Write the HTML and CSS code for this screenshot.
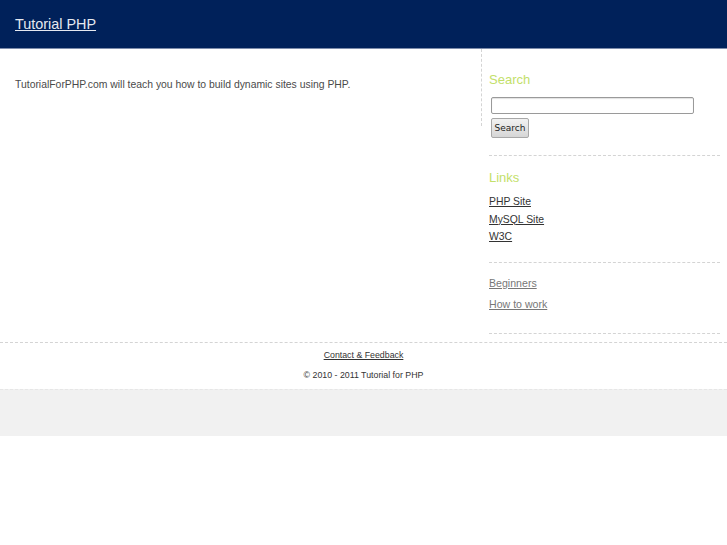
FILE: index.html
```html
<!DOCTYPE html>
<html>
<head>
<meta charset="utf-8">
<title>Tutorial PHP</title>
<link rel="stylesheet" href="styles.css">
</head>
<body>
<div class="header"><a class="logo" href="#">Tutorial PHP</a></div>
<div class="main">
  <div class="content">
    <p>TutorialForPHP.com will teach you how to build dynamic sites using PHP.</p>
  </div>
  <div class="sidebar">
    <div class="block block-search">
      <h2>Search</h2>
      <input class="search-input" type="text">
      <button class="search-btn">Search</button>
    </div>
    <div class="block block-links">
      <h2>Links</h2>
      <ul class="links">
        <li><a href="#">PHP Site</a></li>
        <li><a href="#">MySQL Site</a></li>
        <li><a href="#">W3C</a></li>
      </ul>
    </div>
    <div class="block block-more">
      <ul class="more">
        <li><a href="#">Beginners</a></li>
        <li><a href="#">How to work</a></li>
      </ul>
    </div>
  </div>
</div>
<div class="footer">
  <div class="footer-line"><a href="#">Contact &amp; Feedback</a></div>
  <div class="footer-line">© 2010 - 2011 Tutorial for PHP</div>
</div>
<div class="band"></div>
</body>
</html>
```
FILE: styles.css
```css
html, body { margin: 0; padding: 0; background: #fff; }
body { font-family: "Liberation Sans", Arial, sans-serif; color: #444; }
.header {
  height: 48px;
  background: #00215a;
  border-bottom: 1px solid #7d8cab;
  display: flex;
  align-items: center;
  padding-left: 15px;
}
.logo { color: #e6e9f0; font-size: 14.4px; text-decoration: underline; }
.main {
  display: flex;
  align-items: flex-start;
  padding-bottom: 8px;
  border-bottom: 1px dashed #d4d4d4;
}
.content {
  width: 466px;
  padding: 29px 0 35px 15px;
  border-right: 1px dashed #d4d4d4;
}
.content p { margin: 0; font-size: 10.4px; line-height: 13px; color: #4a4a4a; }
.sidebar { width: 231px; margin-left: 7px; }
.block { border-bottom: 1px dashed #d4d4d4; }
.block h2 {
  margin: 0;
  font-size: 13px;
  line-height: 16px;
  font-weight: normal;
  color: #c3e06a;
}
.block-search { padding: 23px 0 17px; }
.block-search h2 { margin-bottom: 9px; }
.search-input {
  display: block;
  margin: 0 0 4px 2px;
  width: 203px;
  height: 17px;
  box-sizing: border-box;
  border: 1px solid #9a9a9a;
  border-radius: 2px;
  box-shadow: inset 0 1px 1px rgba(0,0,0,0.12);
  padding: 0;
}
.search-btn {
  display: block;
  margin-left: 2px;
  height: 20px;
  width: 38px;
  padding: 0;
  font-family: "DejaVu Sans", sans-serif;
  font-size: 9px;
  color: #222;
  border: 1px solid #a8a8a8;
  border-radius: 2px;
  background: linear-gradient(#f2f2f2, #d6d6d6);
}
.block-links { padding: 14px 0 16px; }
.links { list-style: none; margin: 7px 0 0; padding: 0; }
.links li { font-size: 10.4px; line-height: 17.5px; }
.links a { color: #333; }
.block-more { padding: 10px 0 18px; }
.more { list-style: none; margin: 0; padding: 0; }
.more li { font-size: 10.6px; line-height: 21px; }
.more a { color: #777; }
.footer { padding: 2px 0 4px; text-align: center; }
.footer-line { font-size: 8.8px; line-height: 20px; color: #333; }
.footer-line a { color: #333; }
.band { height: 46px; background: #f1f1f1; border-top: 1px dashed #e6e6e6; }
```
